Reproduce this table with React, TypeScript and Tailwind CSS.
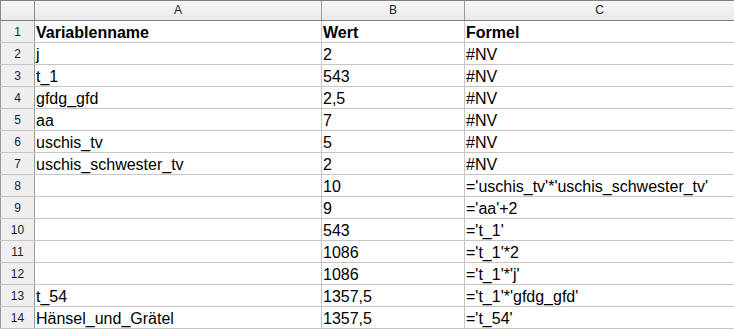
const ROWS: [string, string, string][] = [
  ['Variablenname', 'Wert', 'Formel'],
  ['j', '2', '#NV'],
  ['t_1', '543', '#NV'],
  ['gfdg_gfd', '2,5', '#NV'],
  ['aa', '7', '#NV'],
  ['uschis_tv', '5', '#NV'],
  ['uschis_schwester_tv', '2', '#NV'],
  ['', '10', "='uschis_tv'*'uschis_schwester_tv'"],
  ['', '9', "='aa'+2"],
  ['', '543', "='t_1'"],
  ['', '1086', "='t_1'*2"],
  ['', '1086', "='t_1'*'j'"],
  ['t_54', '1357,5', "='t_1'*'gfdg_gfd'"],
  ['Hänsel_und_Grätel', '1357,5', "='t_54'"],
];

export default function App() {
  return (
    <div
      className="h-[329px] w-[734px] overflow-hidden bg-white text-black"
      style={{ fontFamily: '"Liberation Sans", Arial, sans-serif' }}
    >
      {/* Column header */}
      <div className="flex h-[21px] border-t border-b border-[#7f7f7f] bg-gradient-to-b from-[#f7f7f7] to-[#e9e9e9] text-[12px] leading-[19px] text-[#1c1c30]">
        <div className="w-[35px] shrink-0 border-l border-r border-[#8a8a8a]" />
        <div className="w-[287px] shrink-0 border-r border-[#9a9a9a] text-center">A</div>
        <div className="w-[143px] shrink-0 border-r border-[#9a9a9a] text-center">B</div>
        <div className="flex-1 text-center">C</div>
      </div>

      {/* Rows */}
      {ROWS.map((row, i) => (
        <div key={i} className="flex h-[22px] border-b border-[#c6c6c6]">
          <div className="w-[35px] shrink-0 border-l border-r border-[#9a9a9a] bg-[#efefef] text-center text-[12px] leading-[22px] text-[#1c1c30]">
            {i + 1}
          </div>
          {row.map((cell, j) => (
            <div
              key={j}
              className={`shrink-0 overflow-hidden whitespace-nowrap pl-[1px] text-[16px] leading-[24px] ${
                j === 0 ? 'w-[287px] border-r border-[#c6c6c6]' : j === 1 ? 'w-[143px] border-r border-[#c6c6c6]' : 'flex-1'
              } ${i === 0 ? 'font-bold' : ''}`}
            >
              {cell}
            </div>
          ))}
        </div>
      ))}
    </div>
  );
}
